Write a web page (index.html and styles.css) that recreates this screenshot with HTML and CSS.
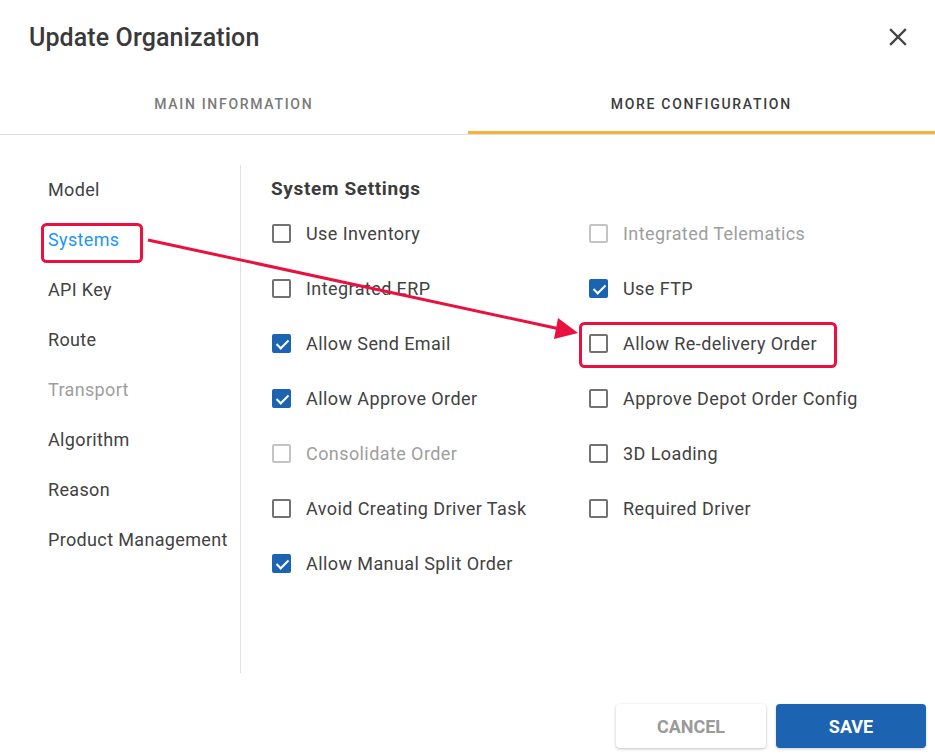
FILE: index.html
```html
<!DOCTYPE html>
<html>
<head>
<meta charset="utf-8">
<link rel="stylesheet" href="styles.css">
</head>
<body>
<div class="dialog">
  <header class="header">
    <h1 class="title">Update Organization</h1>
    <button class="close" aria-label="Close">
      <svg width="18" height="18" viewBox="0 0 18 18"><path d="M2 2L16 16M16 2L2 16" stroke="#444" stroke-width="2.4" stroke-linecap="square"/></svg>
    </button>
  </header>
  <nav class="tabs">
    <div class="tab">MAIN INFORMATION</div>
    <div class="tab active">MORE CONFIGURATION</div>
  </nav>
  <main class="body">
    <ul class="side">
      <li>Model</li>
      <li class="current">Systems</li>
      <li>API Key</li>
      <li>Route</li>
      <li class="muted">Transport</li>
      <li>Algorithm</li>
      <li>Reason</li>
      <li>Product Management</li>
    </ul>
    <section class="content">
      <h2 class="section-title">System Settings</h2>
      <div class="grid">
        <label class="opt"><span class="box"></span>Use Inventory</label>
        <label class="opt disabled"><span class="box"></span>Integrated Telematics</label>
        <label class="opt"><span class="box"></span>Integrated ERP</label>
        <label class="opt"><span class="box checked"></span>Use FTP</label>
        <label class="opt"><span class="box checked"></span>Allow Send Email</label>
        <label class="opt"><span class="box"></span>Allow Re-delivery Order</label>
        <label class="opt"><span class="box checked"></span>Allow Approve Order</label>
        <label class="opt"><span class="box"></span>Approve Depot Order Config</label>
        <label class="opt disabled"><span class="box"></span>Consolidate Order</label>
        <label class="opt"><span class="box"></span>3D Loading</label>
        <label class="opt"><span class="box"></span>Avoid Creating Driver Task</label>
        <label class="opt"><span class="box"></span>Required Driver</label>
        <label class="opt"><span class="box checked"></span>Allow Manual Split Order</label>
      </div>
    </section>
  </main>
  <footer class="footer">
    <button class="btn cancel">CANCEL</button>
    <button class="btn save">SAVE</button>
  </footer>
  <svg class="annot" width="935" height="756" viewBox="0 0 935 756">
    <rect x="42.5" y="224.5" width="99" height="37" rx="4" fill="none" stroke="#e8113f" stroke-width="3"/>
    <rect x="580.5" y="323.5" width="255" height="43" rx="4" fill="none" stroke="#e8113f" stroke-width="3"/>
    <line x1="148" y1="240" x2="560" y2="329" stroke="#e8113f" stroke-width="3"/>
    <polygon points="578,333 554,339 558,318" fill="#e8113f"/>
  </svg>
</div>
</body>
</html>
```
FILE: styles.css
```css
* { box-sizing: border-box; }
html, body { margin: 0; padding: 0; background: #fff; }
body { font-family: Roboto, "Noto Sans", sans-serif; color: #3c3c3c; }
.dialog { position: relative; width: 935px; height: 756px; overflow: hidden; }
.header { height: 74px; display: flex; align-items: center; justify-content: space-between; padding: 0 28px 0 29px; }
.title { margin: 0; font-size: 25px; font-weight: 500; color: #3a3a3a; letter-spacing: 0.1px; }
.close { border: 0; background: none; padding: 0; width: 18px; height: 18px; display: flex; }
.tabs { display: flex; height: 61px; border-bottom: 1px solid #dedede; }
.tab { flex: 1; display: flex; align-items: center; justify-content: center; font-size: 14px; font-weight: 500; letter-spacing: 1.7px; color: #7a7a7a; border-bottom: 3px solid transparent; padding-top: 3px; }
.tab.active { color: #3c3c3c; border-bottom-color: #f6b23c; }
.body { display: flex; padding-top: 30px; height: 538px; }
.side { list-style: none; margin: 0; padding: 0 0 0 48px; width: 241px; height: 508px; border-right: 1px solid #e2e2e2; }
.side li { height: 50px; line-height: 50px; font-size: 18px; letter-spacing: 0.35px; color: #424242; }
.side li.current { color: #2196f3; }
.side li.muted { color: #9e9e9e; }
.content { padding: 12px 0 0 30px; }
.section-title { margin: 0 0 5px; height: 24px; line-height: 24px; font-size: 19px; font-weight: 700; letter-spacing: 0.65px; color: #3c3c3c; }
.grid { display: grid; grid-template-columns: 317px 317px; grid-auto-rows: 55px; }
.opt { display: flex; align-items: center; font-size: 18px; letter-spacing: 0.42px; color: #424242; }
.opt.disabled { color: #9e9e9e; }
.box { width: 19px; height: 19px; border: 2px solid #727272; border-radius: 2px; margin: 0 15px 0 1px; position: relative; }
.opt.disabled .box { border-color: #c4c4c4; }
.box.checked { background: #1c63b1; border-color: #1c63b1; }
.box.checked::after { content: ""; position: absolute; left: 5px; top: 1px; width: 5px; height: 10px; border: solid #fff; border-width: 0 2.2px 2.2px 0; transform: rotate(45deg); }
.footer { display: flex; justify-content: flex-end; gap: 10px; padding: 31px 9px 0 0; }
.btn { width: 150px; height: 44px; border: 0; border-radius: 4px; font-family: Roboto, sans-serif; font-size: 18px; font-weight: 700; }
.cancel { background: #fff; color: #9a9a9a; box-shadow: 0 1px 3px rgba(0,0,0,0.25); }
.save { background: #1c63b1; color: #fff; box-shadow: 0 1px 3px rgba(0,0,0,0.2); }
.annot { position: absolute; left: 0; top: 0; pointer-events: none; }
```
